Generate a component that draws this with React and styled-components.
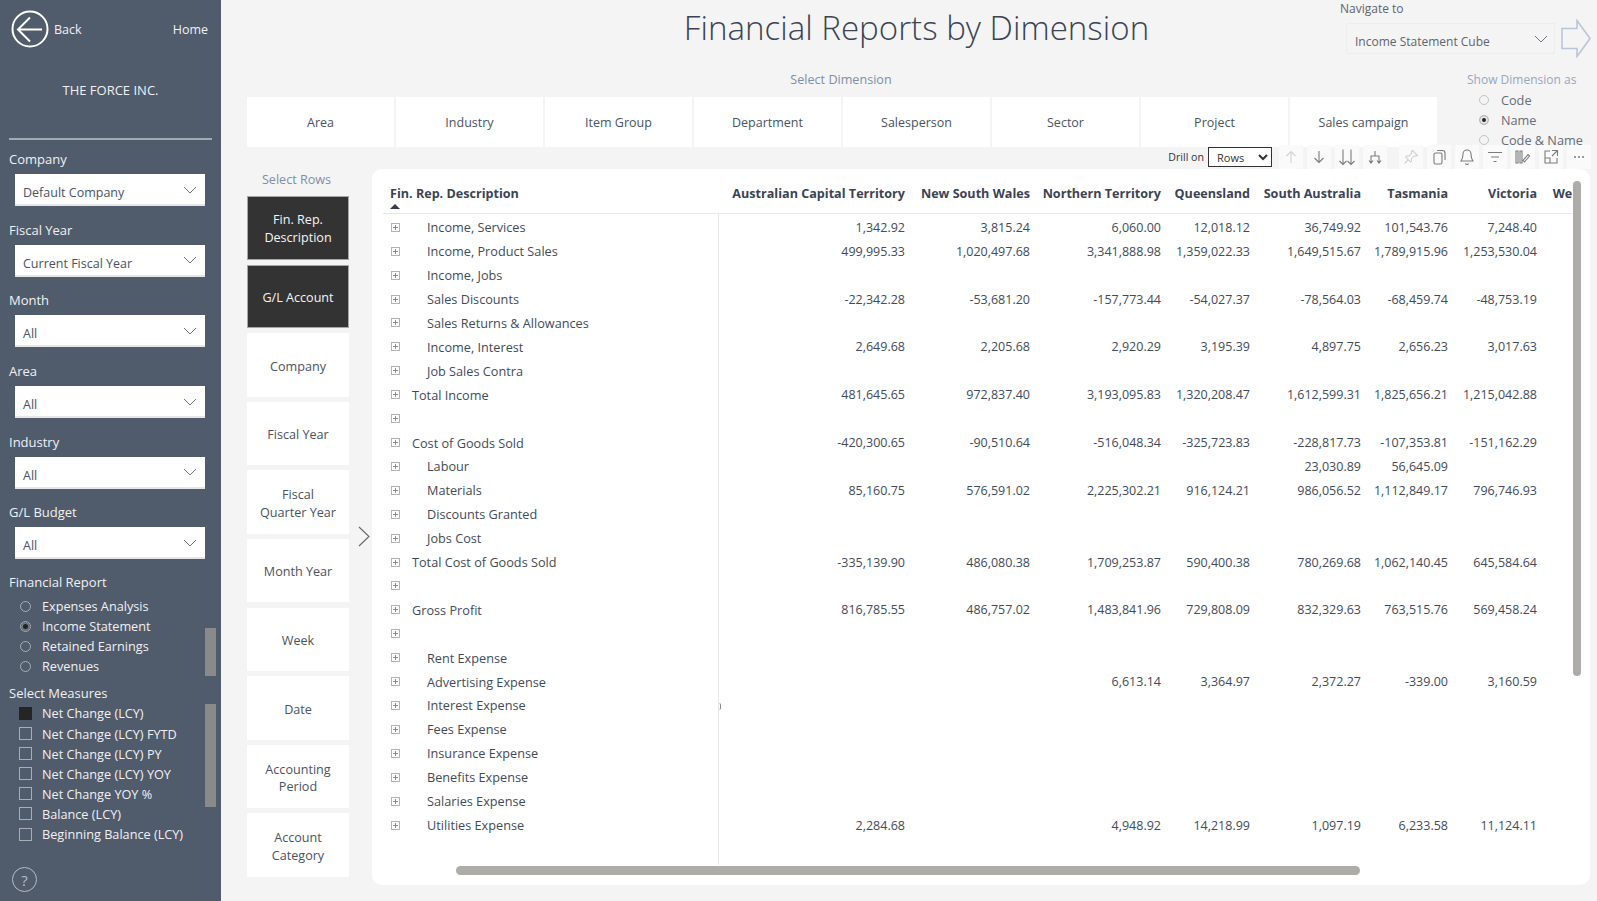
import styled, { createGlobalStyle } from "styled-components";

const GlobalStyle = createGlobalStyle`
    html, body {
        margin: 0;
        padding: 0;
        background: #f4f4f4;
    }
    body {
        font-family: "Open Sans", "Noto Sans", "Liberation Sans", sans-serif;
        font-size: 13px;
        color: #3d4555;
    }
    * {
        box-sizing: border-box;
    }
`

const Page = styled.div`
    display: flex;
    width: 1597px;
    height: 901px;
    overflow: hidden;
`

/* sidebar */
const Sidebar = styled.aside`
    display: flex;
    flex-direction: column;
    flex: 0 0 221px;
    padding: 0 9px;
    background: #505b6c;
    color: #f0f1f3;
`

const TopNav = styled.div`
    display: flex;
    align-items: center;
    height: 58px;
    padding: 0 4px 0 2px;
    font-size: 12.5px;
    span:last-child {
        margin-left: auto;
    }
`

const BackIcon = styled.svg`
    width: 38px;
    height: 38px;
    margin-right: 5px;
`

const CompanyName = styled.div`
    height: 82px;
    padding-top: 23px;
    text-align: center;
    font-size: 13px;
    line-height: 18px;
    border-bottom: 2px solid #a4a9b1;
`

const Fields = styled.div`
    display: grid;
    row-gap: 13.7px;
    margin-top: 9px;
`

const FieldLabel = styled.div`
    font-size: 13px;
    line-height: 20px;
`

const DropBox = styled.div`
    display: flex;
    align-items: center;
    justify-content: space-between;
    height: 32px;
    margin: 5px 0 0 6px;
    padding: 7px 8px 0;
    width: 190px;
    background: #fff;
    border-bottom: 2px solid #e6e6e6;
    color: #4a5363;
    font-size: 12.5px;
`

const Chevron = styled.svg`
    width: 14px;
    height: 8px;
    margin-top: -6px;
    fill: none;
    stroke: #6f7683;
    stroke-width: 1;
`

const GroupTitle = styled(FieldLabel)`
    margin-top: ${(props) => props.$gap}px;
`

const OptionList = styled.div`
    position: relative;
    margin-top: ${(props) => props.$gap}px;
`

const OptionRow = styled.div`
    display: flex;
    align-items: center;
    height: ${(props) => props.$height || 20}px;
    padding-left: ${(props) => props.$inset}px;
    font-size: 12.7px;
`

const RadioMark = styled.span`
    flex: none;
    width: 11px;
    height: 11px;
    margin-right: 11px;
    border-radius: 50%;
    border: 1px solid #a9adb5;
    background: ${(props) => props.$on ? "#1f2226" : "transparent"};
    box-shadow: ${(props) => props.$on ? "inset 0 0 0 2px #6f7682" : "none"};
`

const CheckMark = styled.span`
    flex: none;
    width: 13px;
    height: 13px;
    margin-right: 10px;
    border: 1px solid #a9adb5;
    background: ${(props) => props.$on ? "#252525" : "transparent"};
    border-color: ${(props) => props.$on ? "#252525" : "#a9adb5"};
`

const SideScroll = styled.div`
    position: absolute;
    top: ${(props) => props.$top}px;
    right: -4px;
    width: 11px;
    height: ${(props) => props.$height}px;
    background: #8a8a8a;
`

const HelpButton = styled.div`
    display: flex;
    align-items: center;
    justify-content: center;
    width: 25px;
    height: 25px;
    margin: auto 0 9px 3px;
    border: 1px solid #b9bcc2;
    border-radius: 50%;
    color: #b9bcc2;
    font-size: 15px;
`

/* right hand side */
const Main = styled.main`
    display: flex;
    flex-direction: column;
    flex: 1;
    min-width: 0;
    padding: 0 6px 0 26px;
`

const TitleRow = styled.header`
    display: flex;
    flex: 0 0 63px;
`

const Title = styled.h1`
    flex: 1;
    margin: 0;
    padding-left: 246px;
    text-align: center;
    font-size: 33.1px;
    font-weight: 300;
    line-height: 56px;
    color: #3a4454;
    white-space: nowrap;
`

const NavBlock = styled.div`
    flex: 0 0 251px;
    padding-top: 1px;
    color: #5c6472;
    font-size: 12px;
    line-height: 16px;
`

const NavRow = styled.div`
    display: flex;
    align-items: center;
    justify-content: space-between;
    margin: 2px 0 0 6px;
`

const NavSelect = styled.div`
    display: flex;
    align-items: center;
    justify-content: space-between;
    width: 209px;
    height: 31px;
    padding: 7px 6px 0 8px;
    border: 1px solid #ededed;
    font-size: 12px;
`

const NavArrow = styled.svg`
    width: 30px;
    height: 39px;
    fill: none;
    stroke: #b9c6d8;
    stroke-width: 1.6;
`

const DimensionRow = styled.div`
    display: flex;
    flex: 0 0 84px;
    height: 84px;
    min-height: 0;
`

const DimensionBlock = styled.section`
    flex: 0 0 1190px;
    padding-top: 7px;
`

const SoftHeading = styled.div`
    padding-right: 2px;
    text-align: center;
    font-size: 12.6px;
    line-height: 20px;
    color: #7d8ea9;
`

const DimensionGrid = styled.div`
    display: grid;
    grid-template-columns: repeat(8, 1fr);
    column-gap: 2px;
    margin-top: 7px;
`

const DimensionButton = styled.div`
    display: flex;
    align-items: center;
    justify-content: center;
    height: 50px;
    background: #fff;
    color: #4a5363;
    font-size: 12.5px;
`

const ShowBlock = styled.div`
    flex: 1;
    margin-left: 30px;
    padding-top: 7px;
    color: #646c7a;
`

const ShowHeading = styled(SoftHeading)`
    padding-right: 0;
    text-align: left;
    font-size: 12px;
    color: #98a7c0;
    white-space: nowrap;
`

const ShowRadio = styled(RadioMark)`
    width: 10px;
    height: 10px;
    margin-right: 12px;
    border-color: #c4c4c4;
    background: ${(props) => props.$on ? "#222" : "transparent"};
    box-shadow: ${(props) => props.$on ? "inset 0 0 0 2px #e8e8e8" : "none"};
`

const ContentRow = styled.div`
    position: relative;
    display: flex;
    flex: 0 0 738px;
`

const RowsColumn = styled.div`
    flex: 0 0 102px;
    padding-top: 23px;
`

const RowsHeading = styled(SoftHeading)`
    margin-bottom: 6px;
    padding-right: 3px;
`

const RowsStack = styled.div`
    display: grid;
    row-gap: 5.1px;
`

const RowButton = styled.div`
    display: flex;
    align-items: center;
    justify-content: center;
    height: 63.5px;
    padding: ${(props) => props.$active ? "2px" : "3px"} 8px 0;
    text-align: center;
    font-size: 12.6px;
    line-height: 17.5px;
    background: ${(props) => props.$active ? "#333" : "#fff"};
    color: ${(props) => props.$active ? "#f5f5f5" : "#4a5363"};
    border: ${(props) => props.$active ? "1px solid #a6a6a6" : "none"};
`

const ExpandColumn = styled.div`
    display: flex;
    align-items: center;
    justify-content: center;
    flex: 0 0 23px;
    padding: 40px 0 0 7px;
`

const ExpandIcon = styled.svg`
    flex: none;
    width: 12px;
    height: 21px;
    fill: none;
    stroke: #666;
    stroke-width: 1.1;
`

const Card = styled.section`
    position: relative;
    flex: 1;
    height: 716px;
    margin: 22px 1px 0 0;
    padding-left: 11px;
    background: #fff;
    border-radius: 10px;
    overflow: hidden;
`

const TableClip = styled.div`
    width: 1189px;
    height: 100%;
    overflow: hidden;
`

const GridRow = styled.div`
    display: grid;
    grid-template-columns: 335px 187px 125px 131px 89px 111px 87px 89px 129px;
    width: 1283px;
`

const HeadRow = styled(GridRow)`
    height: 45px;
    padding-top: 15px;
    border-bottom: 1px solid #e8e8e8;
    font-weight: 700;
    font-size: 12.6px;
    line-height: 20px;
    color: #3a4454;
`

const HeadCell = styled.div`
    text-align: ${(props) => props.$first ? "left" : "right"};
    padding-left: ${(props) => props.$first ? "7px" : "0"};
    white-space: nowrap;
    position: relative;
`

const SortMark = styled.span`
    position: absolute;
    left: 7px;
    top: 20px;
    border-left: 5px solid transparent;
    border-right: 5px solid transparent;
    border-bottom: 5px solid #333c4b;
`

const Body = styled.div`
    position: relative;
    padding-top: 1.4px;
    height: 671px;
    &::before {
        content: "";
        position: absolute;
        left: 335px;
        top: 0;
        height: 651px;
        width: 1px;
        background: #e8e8e8;
    }
`

const ResizeMark = styled.span`
    position: absolute;
    left: 336px;
    top: 489px;
    width: 2px;
    height: 7px;
    border-right: 1px solid #888;
    border-radius: 0 4px 4px 0;
`

const DataRow = styled(GridRow)`
    height: 23.92px;
    align-items: center;
    font-size: 12.5px;
    color: #434b5a;
`

const NameCell = styled.div`
    display: flex;
    align-items: center;
    padding-left: 8px;
    font-size: 12.7px;
    white-space: nowrap;
`

const Expander = styled.span`
    position: relative;
    flex: none;
    width: 9px;
    height: 9px;
    margin-right: ${(props) => props.$indent ? "27px" : "12px"};
    border: 1px solid #b3b3b3;
    background:
        linear-gradient(#8c8c8c, #8c8c8c) center / 5px 1px no-repeat,
        linear-gradient(#8c8c8c, #8c8c8c) center / 1px 5px no-repeat;
`

const Value = styled.div`
    text-align: right;
    white-space: nowrap;
`

const HScroll = styled.div`
    position: absolute;
    left: 84px;
    bottom: 10px;
    width: 904px;
    height: 9px;
    border-radius: 5px;
    background: #aeaca9;
`

const VScroll = styled.div`
    position: absolute;
    right: 9px;
    top: 12px;
    width: 8px;
    height: 495px;
    border-radius: 4px;
    background: #aeaca9;
`

const Toolbar = styled.div`
    position: absolute;
    top: -2px;
    right: 0;
    display: flex;
    align-items: center;
    height: 24px;
    font-size: 11.5px;
    color: #333;
`

const DrillLabel = styled.span`
    margin-right: 4px;
    font-size: 10.6px;
    white-space: nowrap;
`

const DrillSelect = styled.select`
    width: 64px;
    height: 20px;
    margin-right: 3px;
    padding: 0 0 0 4px;
    background: #fff;
    border: 1px solid #333;
    border-radius: 0;
    font-family: inherit;
    font-size: 11px;
    color: #333;
`

const ToolButton = styled.span`
    display: flex;
    align-items: center;
    justify-content: center;
    width: 24px;
    height: 24px;
    margin-left: ${(props) => props.$wide ? "12px" : "4px"};
    background: #fafafa;
`

const ToolIcon = styled.svg`
    width: 18px;
    height: 18px;
    fill: none;
    stroke: ${(props) => props.$faint ? "#d2d2d2" : "#7c7c7c"};
    stroke-width: 1.1;
`

const filters = [
    ["Company", "Default Company"],
    ["Fiscal Year", "Current Fiscal Year"],
    ["Month", "All"],
    ["Area", "All"],
    ["Industry", "All"],
    ["G/L Budget", "All"],
];

const reports = ["Expenses Analysis", "Income Statement", "Retained Earnings", "Revenues"];

const measures = [
    "Net Change (LCY)",
    "Net Change (LCY) FYTD",
    "Net Change (LCY) PY",
    "Net Change (LCY) YOY",
    "Net Change YOY %",
    "Balance (LCY)",
    "Beginning Balance (LCY)",
];

const dimensions = ["Area", "Industry", "Item Group", "Department", "Salesperson", "Sector", "Project", "Sales campaign"];

const rowChoices = [
    ["Fin. Rep.", "Description"],
    ["G/L Account"],
    ["Company"],
    ["Fiscal Year"],
    ["Fiscal", "Quarter Year"],
    ["Month Year"],
    ["Week"],
    ["Date"],
    ["Accounting", "Period"],
    ["Account", "Category"],
];

const columns = [
    "Australian Capital Territory",
    "New South Wales",
    "Northern Territory",
    "Queensland",
    "South Australia",
    "Tasmania",
    "Victoria",
    "Western Australia",
];

// name, indented, values per column
const rows = [
    ["Income, Services", true, ["1,342.92", "3,815.24", "6,060.00", "12,018.12", "36,749.92", "101,543.76", "7,248.40"]],
    ["Income, Product Sales", true, ["499,995.33", "1,020,497.68", "3,341,888.98", "1,359,022.33", "1,649,515.67", "1,789,915.96", "1,253,530.04"]],
    ["Income, Jobs", true, []],
    ["Sales Discounts", true, ["-22,342.28", "-53,681.20", "-157,773.44", "-54,027.37", "-78,564.03", "-68,459.74", "-48,753.19"]],
    ["Sales Returns & Allowances", true, []],
    ["Income, Interest", true, ["2,649.68", "2,205.68", "2,920.29", "3,195.39", "4,897.75", "2,656.23", "3,017.63"]],
    ["Job Sales Contra", true, []],
    ["Total Income", false, ["481,645.65", "972,837.40", "3,193,095.83", "1,320,208.47", "1,612,599.31", "1,825,656.21", "1,215,042.88"]],
    ["", false, []],
    ["Cost of Goods Sold", false, ["-420,300.65", "-90,510.64", "-516,048.34", "-325,723.83", "-228,817.73", "-107,353.81", "-151,162.29"]],
    ["Labour", true, ["", "", "", "", "23,030.89", "56,645.09", ""]],
    ["Materials", true, ["85,160.75", "576,591.02", "2,225,302.21", "916,124.21", "986,056.52", "1,112,849.17", "796,746.93"]],
    ["Discounts Granted", true, []],
    ["Jobs Cost", true, []],
    ["Total Cost of Goods Sold", false, ["-335,139.90", "486,080.38", "1,709,253.87", "590,400.38", "780,269.68", "1,062,140.45", "645,584.64"]],
    ["", false, []],
    ["Gross Profit", false, ["816,785.55", "486,757.02", "1,483,841.96", "729,808.09", "832,329.63", "763,515.76", "569,458.24"]],
    ["", false, []],
    ["Rent Expense", true, []],
    ["Advertising Expense", true, ["", "", "6,613.14", "3,364.97", "2,372.27", "-339.00", "3,160.59"]],
    ["Interest Expense", true, []],
    ["Fees Expense", true, []],
    ["Insurance Expense", true, []],
    ["Benefits Expense", true, []],
    ["Salaries Expense", true, []],
    ["Utilities Expense", true, ["2,284.68", "", "4,948.92", "14,218.99", "1,097.19", "6,233.58", "11,124.11"]],
];

function DownChevron() {
    return (
        <Chevron viewBox="0 0 14 8">
            <path d="M1 1l6 6 6-6" />
        </Chevron>
    )
}

const tools = [
    { faint: true, d: "M9 15V3.5M4.5 8 9 3.5 13.5 8" },
    { d: "M9 3v11.5M4.5 10 9 14.5 13.5 10" },
    { d: "M5 1.5v15M1.5 13 5 16.5 8.5 13M13 1.5v15M9.5 13l3.5 3.5 3.5-3.5" },
    { d: "M9 3v5M5 15V8h8v7M3 12.5 5 15l2-2.5M11 12.5l2 2.5 2-2.5" },
    { faint: true, wide: true, d: "M10.5 2.5l5 5-1.2.6-2.3-.1-2.6 2.6.1 2.4-1 1-5-5 1-1 2.4.1L9.5 5.5l-.1-2.3zM6 12l-3.5 3.5" },
    { d: "M7 2.5h5.5A2.5 2.5 0 0 1 15 5v7M5.5 5h5A1.5 1.5 0 0 1 12 6.500v8A1.500 1.500 0 0 1 10.500 16h-5A1.500 1.500 0 0 1 4 14.500v-8A1.500 1.500 0 0 1 5.500 5z" },
    { d: "M9 2a4 4 0 0 1 4 4c0 4 1 5.500 2 7H3c1-1.500 2-3 2-7a4 4 0 0 1 4-4zM7.500 15.500a1.600 1.600 0 0 0 3 0" },
    { d: "M2 4.500h14M5 9h8M7.500 13.500h3" },
    { d: "M2 3h2v12H2zM6 3h2v12H6zM10.500 14l5-6-1.500-1.500-5 6z" },
    { d: "M8 3H3v12h12v-5M3 10h5v5M10 2.500h5.500V8M15.500 2.500 10 8" },
];

function Tools() {
    return (
        <>
            {tools.map((tool) => (
                <ToolButton key={tool.d} $wide={tool.wide}>
                    <ToolIcon viewBox="0 0 18 18" $faint={tool.faint}>
                        <path d={tool.d} />
                    </ToolIcon>
                </ToolButton>
            ))}
            <ToolButton>
                <ToolIcon viewBox="0 0 18 18">
                    <path d="M4 9h2M8 9h2M12 9h2" strokeWidth="1.6" />
                </ToolIcon>
            </ToolButton>
        </>
    )
}

export default function App() {
    return (
        <Page>
            <GlobalStyle />
            <Sidebar>
                <TopNav>
                    <BackIcon viewBox="0 0 38 38" fill="none" stroke="#fff" strokeWidth="2">
                        <circle cx="19" cy="19" r="17.500" />
                        <path d="M7 19.500h24M19 7.500 7 19.500l12 12" />
                    </BackIcon>
                    <span>Back</span>
                    <span>Home</span>
                </TopNav>
                <CompanyName>THE FORCE INC.</CompanyName>
                <Fields>
                    {filters.map(([label, value]) => (
                        <div key={label}>
                            <FieldLabel>{label}</FieldLabel>
                            <DropBox>
                                {value}
                                <DownChevron />
                            </DropBox>
                        </div>
                    ))}
                </Fields>
                <GroupTitle $gap={13}>Financial Report</GroupTitle>
                <OptionList $gap={4}>
                    {reports.map((name) => (
                        <OptionRow key={name} $inset={11}>
                            <RadioMark $on={name === "Income Statement"} />
                            {name}
                        </OptionRow>
                    ))}
                    <SideScroll $top={32} $height={48} />
                </OptionList>
                <GroupTitle $gap={7}>Select Measures</GroupTitle>
                <OptionList $gap={0}>
                    {measures.map((name, i) => (
                        <OptionRow key={name} $inset={10} $height={20.1}>
                            <CheckMark $on={i === 0} />
                            {name}
                        </OptionRow>
                    ))}
                    <SideScroll $top={1} $height={103} />
                </OptionList>
                <HelpButton>?</HelpButton>
            </Sidebar>
            <Main>
                <TitleRow>
                    <Title>Financial Reports by Dimension</Title>
                    <NavBlock>
                        Navigate to
                        <NavRow>
                            <NavSelect>
                                Income Statement Cube
                                <DownChevron />
                            </NavSelect>
                            <NavArrow viewBox="0 0 30 39">
                                <path d="M1 9.500h15V1.500l13 18-13 18v-8H1z" />
                            </NavArrow>
                        </NavRow>
                    </NavBlock>
                </TitleRow>
                <DimensionRow>
                    <DimensionBlock>
                        <SoftHeading>Select Dimension</SoftHeading>
                        <DimensionGrid>
                            {dimensions.map((name) => (
                                <DimensionButton key={name}>{name}</DimensionButton>
                            ))}
                        </DimensionGrid>
                    </DimensionBlock>
                    <ShowBlock>
                        <ShowHeading>Show Dimension as</ShowHeading>
                        {["Code", "Name", "Code & Name"].map((name) => (
                            <OptionRow key={name} $inset={12} $height={20.2}>
                                <ShowRadio $on={name === "Name"} />
                                {name}
                            </OptionRow>
                        ))}
                    </ShowBlock>
                </DimensionRow>
                <ContentRow>
                    <RowsColumn>
                        <RowsHeading>Select Rows</RowsHeading>
                        <RowsStack>
                            {rowChoices.map((lines, i) => (
                                <RowButton key={lines.join(" ")} $active={i < 2}>
                                    <div>
                                        {lines.map((line) => (
                                            <div key={line}>{line}</div>
                                        ))}
                                    </div>
                                </RowButton>
                            ))}
                        </RowsStack>
                    </RowsColumn>
                    <ExpandColumn>
                        <ExpandIcon viewBox="0 0 12 21">
                            <path d="M1 1l10 9.500L1 20" />
                        </ExpandIcon>
                    </ExpandColumn>
                    <Card>
                        <TableClip>
                            <HeadRow>
                                <HeadCell $first>
                                    Fin. Rep. Description
                                    <SortMark />
                                </HeadCell>
                                {columns.map((name) => (
                                    <HeadCell key={name}>{name}</HeadCell>
                                ))}
                            </HeadRow>
                            <Body>
                                {rows.map(([name, indented, values], i) => (
                                    <DataRow key={i}>
                                        <NameCell>
                                            <Expander $indent={indented} />
                                            {name}
                                        </NameCell>
                                        {values.map((value, j) => (
                                            <Value key={j}>{value}</Value>
                                        ))}
                                    </DataRow>
                                ))}
                                <ResizeMark />
                            </Body>
                        </TableClip>
                        <HScroll />
                        <VScroll />
                    </Card>
                    <Toolbar>
                        <DrillLabel>Drill on</DrillLabel>
                        <DrillSelect defaultValue="Rows">
                            <option>Rows</option>
                            <option>Columns</option>
                        </DrillSelect>
                        <Tools />
                    </Toolbar>
                </ContentRow>
            </Main>
        </Page>
    )
}
